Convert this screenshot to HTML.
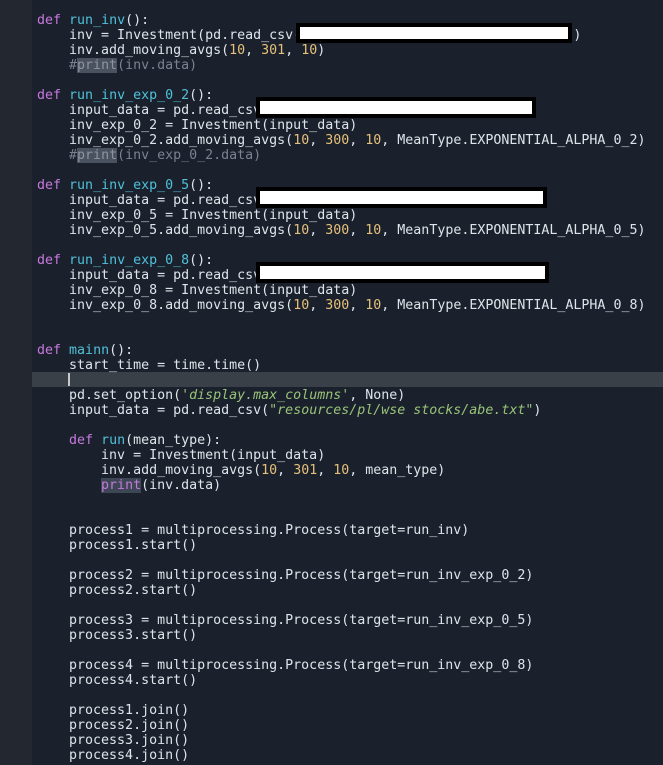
<!DOCTYPE html>
<html><head><meta charset="utf-8"><style>
html,body{margin:0;padding:0;width:663px;height:765px;overflow:hidden;background:#1b212c;}
.g{position:absolute;left:0;top:0;width:32px;height:765px;background:#232830;}
.code{position:absolute;left:37px;top:13px;font-family:"DejaVu Sans Mono","Liberation Mono",monospace;font-size:13.3px;line-height:15px;color:#dfe3ea;white-space:pre;}
.k{color:#c678dd}.f{color:#4fc1d9}.n{color:#e5c07b}.c{color:#7a8290}.h{background:#4a5260;color:#8d95a2}.s{color:#98c379;font-style:italic}.p{color:#c678dd;background:#3d4654}
.cur{position:absolute;left:32px;top:372px;width:631px;height:15px;background:#3a4048;}
.caret{position:absolute;left:68px;top:373px;width:2px;height:13px;background:#c8c8c8;}
.r{position:absolute;background:#fff;border:4px solid #000;box-sizing:border-box;}
</style></head><body>
<div class="g"></div>
<div class="cur"></div><div class="caret"></div>
<div class="code"><span class="k">def</span> <span class="f">run_inv</span>():
    inv = Investment(pd.read_csv(                                  )
    inv.add_moving_avgs(<span class="n">10</span>, <span class="n">301</span>, <span class="n">10</span>)
    <span class="c">#<span class="h">print</span>(inv.data)</span>

<span class="k">def</span> <span class="f">run_inv_exp_0_2</span>():
    input_data = pd.read_csv
    inv_exp_0_2 = Investment(input_data)
    inv_exp_0_2.add_moving_avgs(<span class="n">10</span>, <span class="n">300</span>, <span class="n">10</span>, MeanType.EXPONENTIAL_ALPHA_0_2)
    <span class="c">#<span class="h">print</span>(inv_exp_0_2.data)</span>

<span class="k">def</span> <span class="f">run_inv_exp_0_5</span>():
    input_data = pd.read_csv
    inv_exp_0_5 = Investment(input_data)
    inv_exp_0_5.add_moving_avgs(<span class="n">10</span>, <span class="n">300</span>, <span class="n">10</span>, MeanType.EXPONENTIAL_ALPHA_0_5)

<span class="k">def</span> <span class="f">run_inv_exp_0_8</span>():
    input_data = pd.read_csv
    inv_exp_0_8 = Investment(input_data)
    inv_exp_0_8.add_moving_avgs(<span class="n">10</span>, <span class="n">300</span>, <span class="n">10</span>, MeanType.EXPONENTIAL_ALPHA_0_8)


<span class="k">def</span> <span class="f">mainn</span>():
    start_time = time.time()

    pd.set_option(<span class="s">'display.max_columns'</span>, None)
    input_data = pd.read_csv(<span class="s">"resources/pl/wse stocks/abe.txt"</span>)

    <span class="k">def</span> <span class="f">run</span>(mean_type):
        inv = Investment(input_data)
        inv.add_moving_avgs(<span class="n">10</span>, <span class="n">301</span>, <span class="n">10</span>, mean_type)
        <span class="p">print</span>(inv.data)


    process1 = multiprocessing.Process(target=run_inv)
    process1.start()

    process2 = multiprocessing.Process(target=run_inv_exp_0_2)
    process2.start()

    process3 = multiprocessing.Process(target=run_inv_exp_0_5)
    process3.start()

    process4 = multiprocessing.Process(target=run_inv_exp_0_8)
    process4.start()

    process1.join()
    process2.join()
    process3.join()
    process4.join()</div>
<div class="r" style="left:296px;top:23px;width:276px;height:20px"></div>
<div class="r" style="left:256px;top:97px;width:280px;height:21px"></div>
<div class="r" style="left:256px;top:187px;width:291px;height:21px"></div>
<div class="r" style="left:256px;top:262px;width:293px;height:21px"></div>
</body></html>
